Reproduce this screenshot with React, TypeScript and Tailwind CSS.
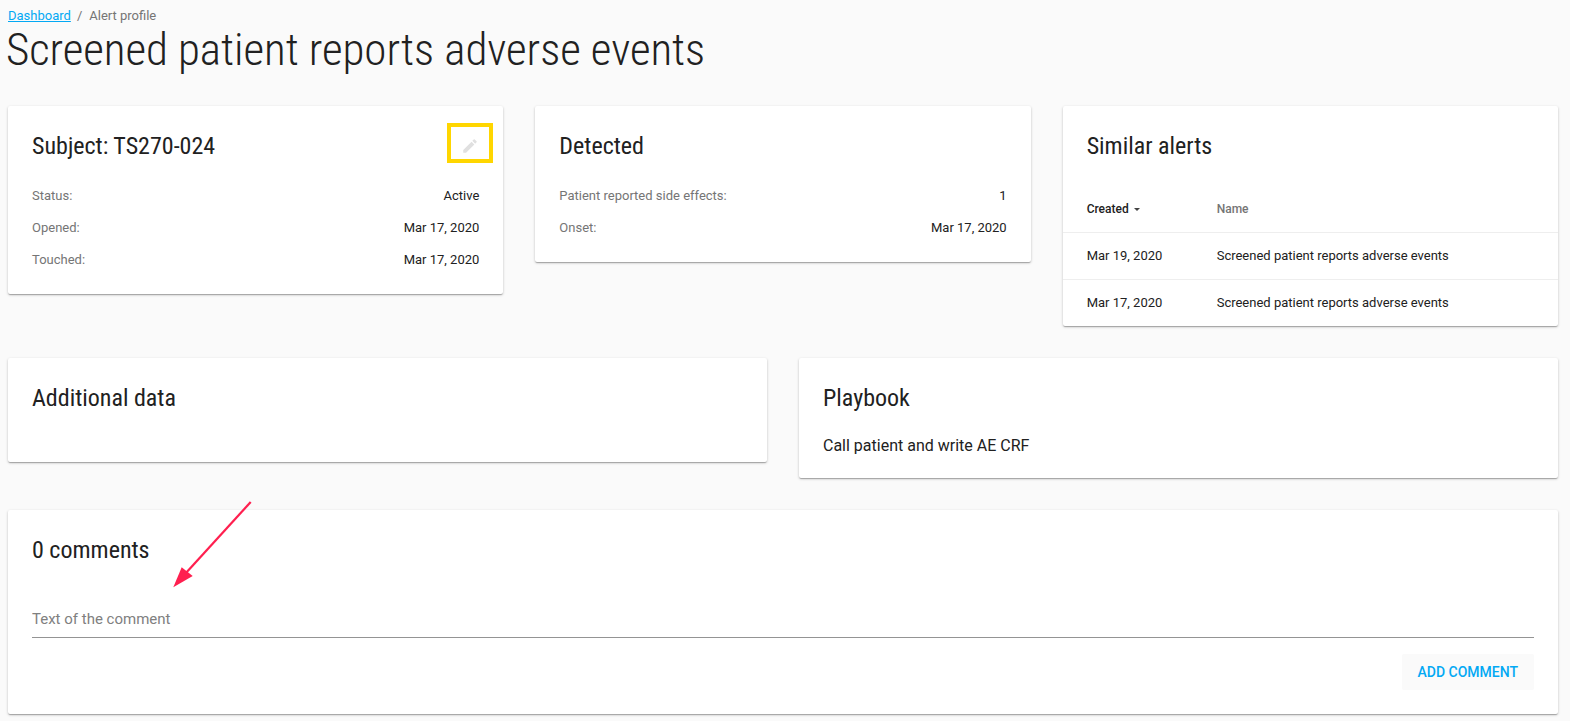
const sans = "font-['Roboto','Liberation_Sans',sans-serif]"

function Card({ className = "", children }: { className?: string; children: React.ReactNode }) {
  return (
    <div className={`rounded-[2px] bg-white shadow-[0_1px_3px_0_rgba(0,0,0,0.2),0_1px_1px_0_rgba(0,0,0,0.14),0_2px_1px_-1px_rgba(0,0,0,0.12)] ${className}`}>
      {children}
    </div>
  )
}

function CardTitle({ children }: { children: React.ReactNode }) {
  return (
    <h2 className="text-[24px] leading-[32px] font-normal font-stretch-condensed text-[#212121]">
      {children}
    </h2>
  )
}

function Row({ label, value }: { label: string; value: string }) {
  return (
    <div className="flex h-[32px] items-center justify-between text-[13px]">
      <span className="text-[#757575]">{label}</span>
      <span className="text-[#212121]">{value}</span>
    </div>
  )
}

export default function App() {
  return (
    <div className={`relative h-[721px] overflow-hidden bg-[#fafafa] pl-2 pr-3 ${sans}`}>
      <div className="flex h-[31px] items-center pt-[1px] text-[13px] text-[#757575]">
        <a className="text-[#03a9f4] underline">Dashboard</a>
        <span className="ml-[6px] mr-[7px]">/</span>
        <span>Alert profile</span>
      </div>
      <h1 className="-ml-[2px] h-[75px] text-[45px] leading-[38px] font-light tracking-[-0.05px] font-stretch-condensed text-[#212121]">
        Screened patient reports adverse events
      </h1>

      <div className="grid grid-cols-3 items-start gap-x-8">
        <Card className="h-[188px] px-6 pt-[24px]">
          <div className="relative">
            <CardTitle>Subject: TS270-024</CardTitle>
            <svg viewBox="0 0 24 24" className="absolute right-0 top-[7px] h-[18px] w-[18px] fill-[#e0e0e0]">
              <path d="M3 17.25V21h3.75L17.81 9.94l-3.75-3.75L3 17.25zM20.71 7.04a1 1 0 0 0 0-1.41l-2.34-2.34a1 1 0 0 0-1.41 0l-1.83 1.83 3.75 3.75 1.83-1.83z" />
            </svg>
          </div>
          <div className="mt-[18px]">
            <Row label="Status:" value="Active" />
            <Row label="Opened:" value="Mar 17, 2020" />
            <Row label="Touched:" value="Mar 17, 2020" />
          </div>
        </Card>

        <Card className="h-[156px] px-6 pt-[24px]">
          <CardTitle>Detected</CardTitle>
          <div className="mt-[18px]">
            <Row label="Patient reported side effects:" value="1" />
            <Row label="Onset:" value="Mar 17, 2020" />
          </div>
        </Card>

        <Card className="h-[220px] pt-[24px]">
          <div className="px-6">
            <CardTitle>Similar alerts</CardTitle>
          </div>
          <div className="mt-[24px] flex h-[47px] items-center border-b border-[#eeeeee] pl-6 text-[12px] font-medium">
            <span className="flex w-[130px] items-center text-[#212121]">
              Created
              <span className="ml-[5px] h-0 w-0 border-x-[3.5px] border-t-[3.5px] border-x-transparent border-t-[#424242]" />
            </span>
            <span className="text-[#757575]">Name</span>
          </div>
          <div className="flex h-[47px] items-center border-b border-[#eeeeee] pl-6 text-[13px] text-[#212121]">
            <span className="w-[130px]">Mar 19, 2020</span>
            <span>Screened patient reports adverse events</span>
          </div>
          <div className="flex h-[46px] items-center pl-6 text-[13px] text-[#212121]">
            <span className="w-[130px]">Mar 17, 2020</span>
            <span>Screened patient reports adverse events</span>
          </div>
        </Card>
      </div>

      <div className="mt-8 grid grid-cols-2 items-start gap-x-8">
        <Card className="h-[104px] px-6 pt-[24px]">
          <CardTitle>Additional data</CardTitle>
        </Card>
        <Card className="h-[120px] px-6 pt-[24px]">
          <CardTitle>Playbook</CardTitle>
          <p className="mt-[20px] text-[16px] leading-[24px] text-[#212121]">Call patient and write AE CRF</p>
        </Card>
      </div>

      <Card className="mt-8 h-[204px] px-6 pt-[24px]">
        <CardTitle>0 comments</CardTitle>
        <input
          placeholder="Text of the comment"
          className="mt-[36px] block h-[36px] w-full border-b border-[#949494] pb-[2px] text-[15px] text-[#212121] outline-none placeholder:text-[#808080]"
        />
        <div className="mt-[16px] flex justify-end">
          <button className="h-[36px] rounded-[2px] bg-[#fafafa] px-4 text-[14px] font-medium text-[#03a9f4] uppercase">
            Add comment
          </button>
        </div>
      </Card>

      {/* annotations drawn over the screenshot */}
      <div className="absolute left-[447px] top-[123px] h-[40px] w-[46px] border-4 border-[#ffd600]" />
      <svg className="absolute left-[165px] top-[495px] h-[100px] w-[95px]" viewBox="165 495 95 100">
        <path d="M250.7 502L185 574" stroke="#ff1f4f" strokeWidth="2.2" fill="none" />
        <path d="M173.3 587.3L181.7 567.3L192.7 576z" fill="#ff1f4f" />
      </svg>
    </div>
  )
}
